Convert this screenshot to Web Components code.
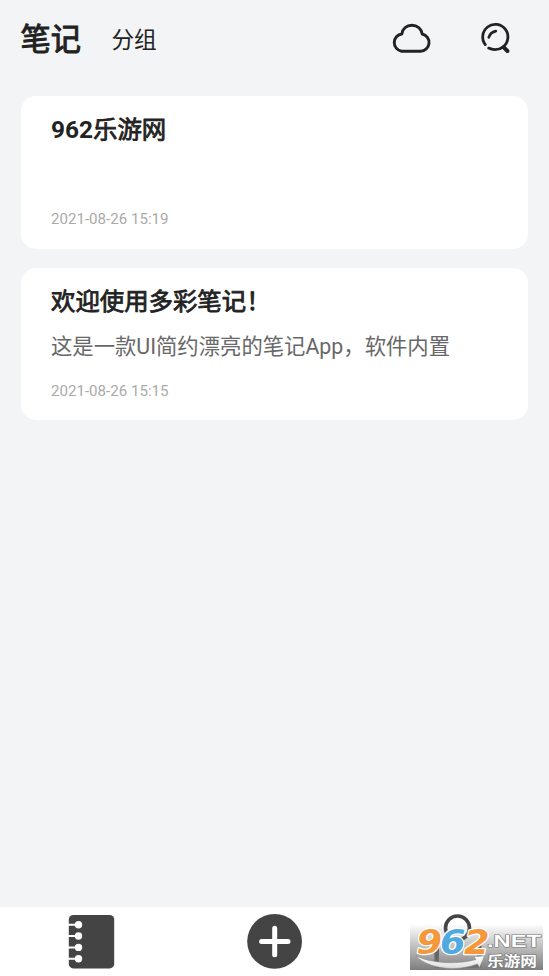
<!DOCTYPE html>
<html lang="zh-CN">
<head>
<meta charset="utf-8">
<title>笔记</title>
<style>
html,body{margin:0;height:100%;overflow:hidden}
body{font-family:Roboto,"Noto Sans CJK SC",sans-serif}
</style>
</head>
<body>
<notes-app></notes-app>
<script>
const define=(name,html)=>customElements.define(name,class extends HTMLElement{
  constructor(){super();this.attachShadow({mode:'open'}).innerHTML=html;}
});

define('app-header',`<style>
:host{display:flex;align-items:center;height:78px;padding:0 36px 0 20.5px;box-sizing:border-box;color:#222}
h1{margin:2px 30.5px 0 0;font-size:30.2px;line-height:44px;font-weight:400;-webkit-text-stroke:1px #222}
span{font-size:22.7px;line-height:34px;margin-top:3px}
div{margin-left:auto;display:flex;gap:46px;align-items:center}
svg{display:block}
</style>
<h1>笔记</h1><span>分组</span>
<div>
<svg width="42" height="40" viewBox="391 19 42 40" fill="none" stroke="#222" stroke-width="2.9" stroke-linejoin="round"><path d="M402.5 51.2H421.5A8.7 8.7 0 0 0 423.2 34C422.3 28.8 418.2 25.2 412.9 25.2S403.6 28.8 402.8 34A8.7 8.7 0 0 0 402.5 51.2Z"/></svg>
<svg width="35" height="40" viewBox="478 18.2 35 40" fill="none" stroke="#222" stroke-width="2.8" stroke-linecap="round"><path d="M485.3 43.8A12.6 12.6 0 1 1 503.2 46"/><path d="M488.6 47.3C493.3 49.6 499.3 49 503.2 46"/><path d="M488.8 36.6C489.6 33.6 492 31.1 495.8 30.3" stroke-width="2.7"/><path d="M503.8 46.6L507.4 50.2" stroke-width="4"/></svg>
</div>`);

define('note-card',`<style>
:host{display:flex;flex-direction:column;box-sizing:border-box;height:152.5px;padding:16px 30px 19.5px;border-radius:15px;background:#fff}
.title{font-size:24.4px;line-height:36px;font-weight:400;-webkit-text-stroke:.8px #222;color:#222;white-space:nowrap}
.body{margin-top:11px;font-size:21.35px;line-height:32px;color:#686868;white-space:nowrap}
.date{margin-top:auto;font-size:15.1px;line-height:20px;color:#aaa}
</style>
<div class="title"><slot name="title"></slot></div><div class="body"><slot></slot></div><div class="date"><slot name="date"></slot></div>`);

define('site-badge',`<style>:host{display:block}svg{display:block}</style>
<svg width="133" height="46" viewBox="410 924 133 46">
<defs>
<linearGradient id="shade" x2="0" y2="1"><stop stop-color="#777" stop-opacity="0"/><stop offset="1" stop-color="#777" stop-opacity=".95"/></linearGradient>
<linearGradient id="swoosh" x2="0" y2="1"><stop stop-color="#fff"/><stop offset="1" stop-color="#ddd"/></linearGradient>
</defs>
<rect x="410" y="924" width="133" height="46" fill="url(#shade)"/>
<path d="M416 956C432 964 459 964.5 476 959.5L474 956.5L484.5 956L479.5 967.5L477.5 964C456 972 429 969 416 956Z" fill="url(#swoosh)" stroke="#888" stroke-width=".5"/>
<g font-family="DejaVu Sans" font-weight="700" font-style="italic" font-size="33" paint-order="stroke" stroke="#fff" stroke-width="2.4" stroke-linejoin="round">
<text x="416.5" y="954" textLength="25.5" lengthAdjust="spacingAndGlyphs" fill="#f4983b">9</text>
<text x="440" y="954" textLength="25.5" lengthAdjust="spacingAndGlyphs" fill="#50a9df">6</text>
<text x="464" y="954" textLength="25.5" lengthAdjust="spacingAndGlyphs" fill="#f4983b">2</text>
</g>
<g fill="#fff" stroke="#777" stroke-width="1.2" paint-order="stroke" font-weight="700">
<text x="487" y="947" font-family="Liberation Sans" font-size="17" textLength="54" lengthAdjust="spacingAndGlyphs">.NET</text>
<text x="487" y="966.3" font-family="Noto Sans CJK SC" font-size="13.2" textLength="50" lengthAdjust="spacingAndGlyphs">乐游网</text>
</g>
</svg>`);

define('tab-bar',`<style>
:host{position:relative;display:grid;grid-template-columns:repeat(3,1fr);height:69px;background:#fff}
.tab{display:flex;justify-content:center;padding-top:6px}
svg{display:block}
site-badge{position:absolute;right:6px;bottom:6px}
</style>
<div class="tab"><svg width="60" height="60" viewBox="62 913 60 60"><rect x="68.8" y="915" width="45.4" height="53.4" rx="4.5" fill="#444"/><g fill="#fff"><circle cx="78.5" cy="924.7" r="3.7"/><circle cx="78.5" cy="936" r="3.7"/><circle cx="78.5" cy="947.4" r="3.7"/><circle cx="78.5" cy="958.8" r="3.7"/><path d="M68 923.8h11v2H68zM68 935h11v2H68zM68 946.4h11v2H68zM68 957.8h11v2H68z"/></g></svg></div>
<div class="tab"><svg width="60" height="60" viewBox="244.8 913 60 60"><circle cx="274.4" cy="941.4" r="27.4" fill="#444"/><path d="M261.4 941.6H287.8M274.5 928.3V954.7" stroke="#fff" stroke-width="5" stroke-linecap="round"/></svg></div>
<div class="tab"><svg width="60" height="60" viewBox="427.8 913 60 60" fill="none" stroke="#444"><path d="M436.5 943V966H479V943" stroke-width="4.5" stroke-linejoin="round"/><circle cx="457.3" cy="928" r="12" stroke-width="3.6"/></svg></div>
<site-badge></site-badge>`);

define('notes-app',`<style>
:host{display:flex;flex-direction:column;height:100vh;background:#f3f4f6}
main{flex:1;display:flex;flex-direction:column;gap:19px;padding:18px 21px}
b{font-weight:700;-webkit-text-stroke:0}
</style>
<app-header></app-header>
<main>
<note-card><span slot="title"><b>962</b>乐游网</span><span slot="date">2021-08-26 15:19</span></note-card>
<note-card><span slot="title">欢迎使用多彩笔记！</span>这是一款UI简约漂亮的笔记App，软件内置<span slot="date">2021-08-26 15:15</span></note-card>
</main>
<tab-bar></tab-bar>`);
</script>
</body>
</html>
